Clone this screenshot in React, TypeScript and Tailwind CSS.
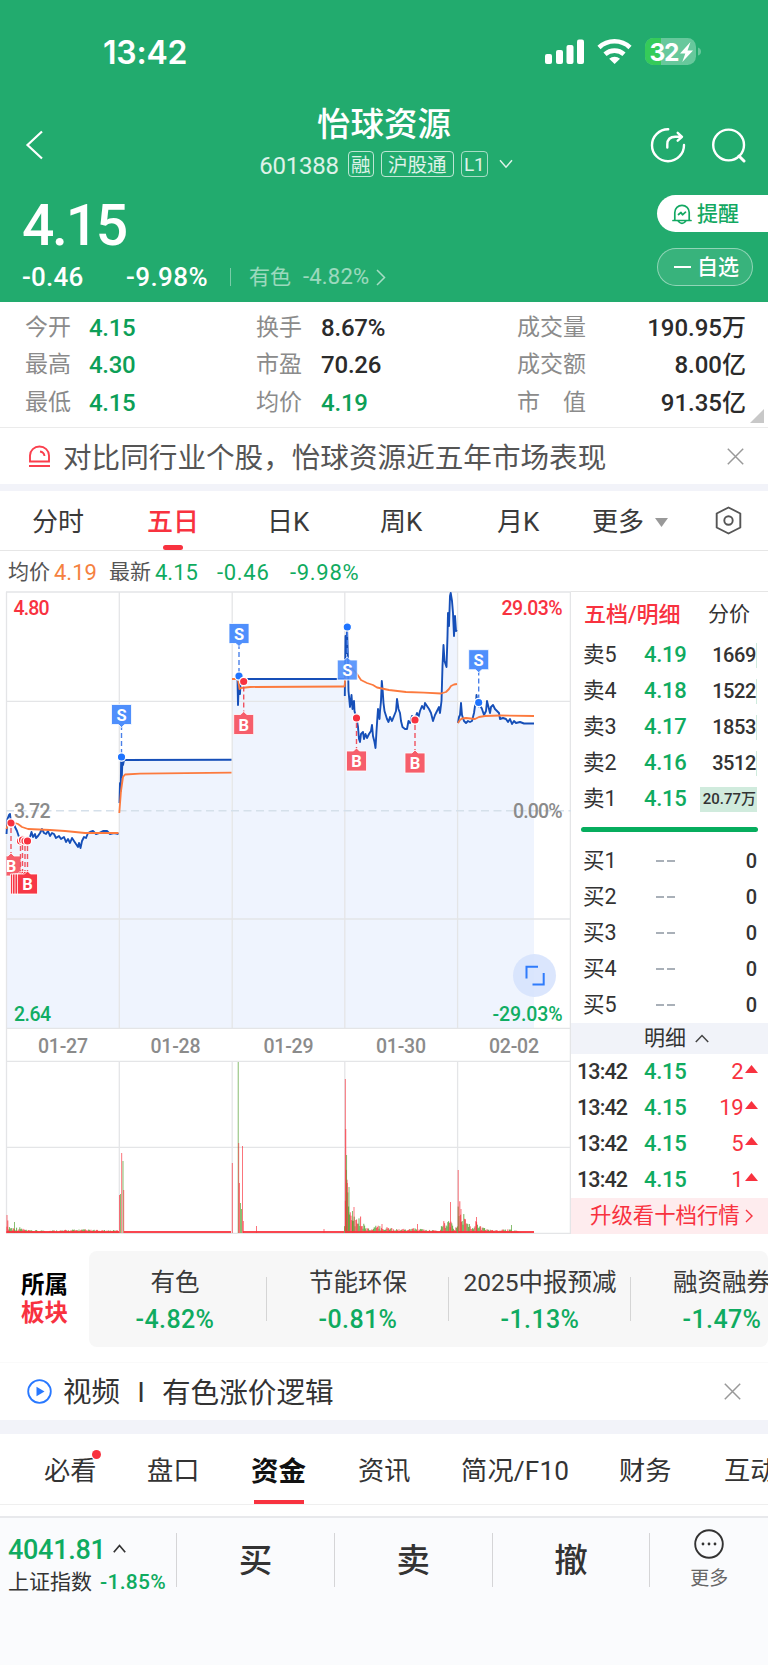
import { Fragment } from 'react';

const STATS = [
  [
    { label: '今开', value: '4.15', down: true },
    { label: '换手', value: '8.67%', down: false },
    { label: '成交量', value: '190.95万', down: false },
  ],
  [
    { label: '最高', value: '4.30', down: true },
    { label: '市盈', value: '70.26', down: false },
    { label: '成交额', value: '8.00亿', down: false },
  ],
  [
    { label: '最低', value: '4.15', down: true },
    { label: '均价', value: '4.19', down: true },
    { label: '市　值', value: '91.35亿', down: false },
  ],
];

const ASKS = [
  { label: '卖5', price: '4.19', qty: '1669' },
  { label: '卖4', price: '4.18', qty: '1522' },
  { label: '卖3', price: '4.17', qty: '1853' },
  { label: '卖2', price: '4.16', qty: '3512' },
  { label: '卖1', price: '4.15', qty: '20.77万', big: true },
];

const BIDS = ['买1', '买2', '买3', '买4', '买5'];

const TICKS = [2, 19, 5, 1];

const SECTORS = [
  { name: '有色', pct: '-4.82%' },
  { name: '节能环保', pct: '-0.81%' },
  { name: '2025中报预减', pct: '-1.13%' },
  { name: '融资融券', pct: '-1.47%' },
];

// price polylines, one per trading day
const PRICE_DAYS = [
  '6.5,243 7.5,228 9,224 10,223 11,232 13,230 15,236 17,240 19,246 21,250 24,251 26,250 28,248 30,246 31.5,241 33,246 35,243 36,247 38,245 40,242 42,238 44,242 46,243 48,240 50,245 52,242 54,243 56,247 59,245 61,248 64,246 66,251 68,248 70,252 72,247 74,250 76,253 78,256 79,252 80.5,257 82,250 84,246 86,247 88,242 90,241 93,240 96,243 99,242 103,240 107,240 110,243 114,242 118.5,243',
  '119.5,212 120,192 120.7,200 121.2,166 121.8,186 122.5,168 123,174 124,169 231.5,168.7',
  '232,88 237.5,88 238,114 239,85 240,103 240.7,88 344.5,88',
  '344.8,105 345.5,45 346.5,62 347,35 348,70 348.5,100 350,116 351,108 351.5,104 352.5,118 354,110 354.5,120 355.5,124 356.5,127 358,136 359,148 360,151 361,143 363,141 364,148 365.5,143 367,147 369,143 371,140 372,134 373,145 374.5,151 375.5,157 376.5,140 377.5,125 378,118 379.5,128 380,120 381,110 381.8,90 382.7,100 383.5,112 384.5,120 387,128 388.5,131 390,126 392,130 394,125 396,120 397,108 398.5,118 400,122 401,130 402.5,136 405,138 407,138 408.5,130 410,132 412,125 414,129 415,128 417,122 418.5,126 420,120 422,115 424,118 425,112 427,115 429,118 431,122 433,130 435,124 437,120 439,116 440,122 441.5,110 442.5,75 443.5,54 444.5,70 446.5,76 447.5,45 448,22 449,35 450,5 450.7,2 452,10 453,22 454,45 455,25 456,40 457,39',
  '458,132 459,126 460,124 461,112 462,124 464,130 466,132 468,130 470,131 472,130 474,122 475,115 476,112 476.5,104 477.5,112 479,110 480,114 482,118 484,124 486,120 487,110 489,118 490,122 491,116 493,114 495,118 497,120 499,122 500,128 503,127 506,128 508,131 510,128 512,133 514,130 516,132 520,131 524,132.5 534,132.5',
];

const AVG_DAYS = [
  '6.5,238 8,232 10,230 15,232 18,233 22,236 28,238 50,239 65,240 85,242 118.5,242',
  '119.3,222 121,200 123,186 125,183.5 140,182.7 231.5,181.7',
  '232,88 238,88 239.5,98 241,97 250,96 344.5,95.5',
  '344.5,96 345.5,85 347,78 352,77 357,83 361,89 367,92 373,94 377,96.5 389,99 406,101 424,101.7 441,102.5 446,101 449,98 451,95 454,93.5 457,93',
  '458,132 460,129 462,127.5 466,127 475,128 479,126 485,125 500,124.5 534,125',
];

const DAY_EDGES = [
  [6, 119],
  [119, 232],
  [232, 344.5],
  [344.5, 457.5],
  [457.5, 534],
];

// [x, height] envelope of the intraday volume
const VOLUME_ENVELOPE = [
  [6.5, 18], [8, 9], [12, 6], [20, 6], [27, 3], [60, 3], [80, 4], [100, 3], [118, 3],
  [119, 0], [344, 0],
  [344.5, 60], [347, 70], [350, 40], [354, 18], [360, 17], [365, 7], [371, 4], [376, 8], [381, 7],
  [390, 6], [400, 4], [416, 5], [430, 3], [440, 3], [443, 16], [446, 8], [450, 17], [453, 7], [457, 7],
  [458, 38], [461, 24], [466, 15], [471, 6], [477, 15], [481, 6], [495, 3], [512, 4], [520, 1], [534, 0],
];

const VOLUME_SPIKES = [
  { x: 7, h: 18, up: true }, { x: 14.5, h: 11, up: false },
  { x: 119.5, h: 38, up: true }, { x: 120.5, h: 39, up: false }, { x: 121.7, h: 80, up: true },
  { x: 123, h: 72, up: false }, { x: 123.7, h: 43, up: true },
  { x: 232.3, h: 70, up: true }, { x: 238.2, h: 171, up: false }, { x: 238.7, h: 90, up: true },
  { x: 239.4, h: 50, up: true }, { x: 240.5, h: 30, up: false }, { x: 241.5, h: 24, up: false },
  { x: 242.5, h: 87, up: true }, { x: 243.3, h: 12, up: true }, { x: 256.5, h: 7, up: true }, { x: 324, h: 4, up: true },
  { x: 345.3, h: 154, up: true }, { x: 345.8, h: 104, up: true }, { x: 346.6, h: 78, up: false },
  { x: 347.3, h: 50, up: true }, { x: 349, h: 46, up: false }, { x: 352.5, h: 22, up: false }, { x: 354, h: 26, up: true },
  { x: 382, h: 9, up: true }, { x: 417.5, h: 9, up: true }, { x: 450.5, h: 31, up: true },
  { x: 458.2, h: 63, up: true }, { x: 461, h: 24, up: true }, { x: 476.5, h: 16, up: true }, { x: 511.5, h: 8, up: false },
];

function envelopeAt(x: number) {
  for (let i = 1; i < VOLUME_ENVELOPE.length; i++) {
    const [x0, h0] = VOLUME_ENVELOPE[i - 1];
    const [x1, h1] = VOLUME_ENVELOPE[i];
    if (x <= x1) return h0 + ((h1 - h0) * (x - x0)) / (x1 - x0);
  }
  return 0;
}

const VOLUME_BARS = Array.from({ length: 660 }, (_, i) => {
  const x = 6.5 + i * 0.8;
  const noise = Math.abs(Math.sin(i * 12.9898) * 43758.5453) % 1;
  return { x, h: envelopeAt(x) * (0.35 + noise * 0.65), up: (i * 7919) % 13 < 6 };
}).filter((b) => b.h > 0 && b.x < 534);

const UP = '#f8323c';
const DOWN = '#4f9e2c';

function TradeMarker({ x, top, dot, kind, solid, under, covered }: {
  x: number; top: number; dot: number; kind: 'B' | 'S'; solid?: boolean; under?: boolean; covered?: boolean;
}) {
  const sell = kind === 'S';
  const box = sell ? '#4f8ffc' : solid ? '#f73846' : '#f65e6b';
  const line = sell ? '#4a80e8' : '#f0525f';
  const pointDown = sell && !under;
  return (
    <g>
      <line x1={x} x2={x} y1={dot + 5} y2={pointDown ? top + 22 : top - 3} stroke={line} strokeWidth="1.4" strokeDasharray="5 3" />
      <circle cx={x} cy={dot} r="4.2" fill={sell ? '#1f74ff' : '#f73240'} stroke="#fff" strokeWidth="1.2" />
      <path
        d={
          pointDown
            ? `M${x - 10} ${top}h20v20h-7l-3 3l-3-3h-7z`
            : `M${x - 10} ${top}h7l3-3l3 3h7v20h-20z`
        }
        fill={box}
        fillOpacity={under ? 0.9 : 1}
        stroke="#fff"
        strokeWidth="0.8"
      />
      {!covered && (
        <text x={x} y={top + 16} textAnchor="middle" fontSize="16.5" fontWeight="700" fill="#fff">{kind}</text>
      )}
    </g>
  );
}

function Chart() {
  return (
    <svg width="571" height="643" viewBox="0 0 571 643" className="block shrink-0 font-['Roboto']">
      {PRICE_DAYS.map((pts, i) => (
        <polygon key={i} points={`${DAY_EDGES[i][0]},437 ${pts} ${DAY_EDGES[i][1]},437`} fill="#eff4fe" />
      ))}

      {/* grid */}
      <g stroke="#e4e5e7" strokeWidth="1.3">
        <path d="M6 1H571M6 110.3H571M6 328H571M6 437.3H571M6 470.3H571M6 556.3H571M6 642.4H571" />
        <path d="M6.5 1V642M119.3 1V437M232.2 1V437M344.8 1V437M457.6 1V437M570.4 1V642" />
        <path d="M119.3 470V642M232.2 470V642M344.8 470V642M457.6 470V642" />
      </g>
      <path d="M6 219.8H571" stroke="#d5e0ea" strokeWidth="1.6" strokeDasharray="8 4.5" />

      <g fontSize="19.5" fontWeight="500">
        <text x="13.5" y="23.5" fill="#f8323f" textLength="36">4.80</text>
        <text x="562.5" y="23.5" fill="#f8323f" textAnchor="end" textLength="61">29.03%</text>
        <text x="14" y="226.5" fill="#8b8b8b" textLength="36.5">3.72</text>
        <text x="562.5" y="226.5" fill="#8b8b8b" textAnchor="end" textLength="49.5">0.00%</text>
        <text x="14" y="429.5" fill="#10ad63" textLength="37">2.64</text>
        <text x="562.5" y="429.5" fill="#10ad63" textAnchor="end" textLength="70">-29.03%</text>
      </g>

      {PRICE_DAYS.map((pts, i) => (
        <polyline key={i} points={pts} fill="none" stroke="#164fb8" strokeWidth="1.9" strokeLinejoin="round" />
      ))}
      {AVG_DAYS.map((pts, i) => (
        <polyline key={i} points={pts} fill="none" stroke="#fc7a3e" strokeWidth="1.8" strokeLinejoin="round" />
      ))}

      {/* trades */}
      <clipPath id="plot"><rect x="6.5" y="0" width="564" height="437" /></clipPath>
      <g clipPath="url(#plot)">
        <TradeMarker x={11} top={265} dot={232} kind="B" />
        <TradeMarker x={20.5} top={283} dot={250} kind="B" solid covered />
        <TradeMarker x={22.5} top={283} dot={249} kind="B" solid covered />
        <TradeMarker x={25} top={283} dot={250} kind="B" solid covered />
        <TradeMarker x={27.5} top={283} dot={250} kind="B" solid />
        <TradeMarker x={121.5} top={113.5} dot={166} kind="S" />
        <TradeMarker x={239} top={32.5} dot={85} kind="S" />
        <TradeMarker x={243.7} top={123.5} dot={90.5} kind="B" />
        <TradeMarker x={347.3} top={69} dot={36} kind="S" under />
        <TradeMarker x={356.5} top={160} dot={127} kind="B" />
        <TradeMarker x={415} top={162} dot={129} kind="B" />
        <TradeMarker x={478.7} top={58.7} dot={111.5} kind="S" />
      </g>

      {/* expand */}
      <circle cx="534.5" cy="384.5" r="21.5" fill="#d5e2fd" fillOpacity="0.85" />
      <path d="M526.5 387.5V375.7H538M532.5 393.5H543.7V382" fill="none" stroke="#2f7bfb" strokeWidth="2" />

      <g fontSize="19.5" fontWeight="500" fill="#8b8b8b" textAnchor="middle">
        <text x="63" y="461.5" textLength="50">01-27</text>
        <text x="175.5" y="461.5" textLength="50">01-28</text>
        <text x="288.5" y="461.5" textLength="50">01-29</text>
        <text x="401" y="461.5" textLength="50">01-30</text>
        <text x="514" y="461.5" textLength="50">02-02</text>
      </g>

      {/* volume */}
      {VOLUME_BARS.map((b, i) => (
        <rect key={i} x={b.x} y={642 - b.h} width="1" height={b.h} fill={b.up ? UP : DOWN} fillOpacity="0.8" />
      ))}
      {VOLUME_SPIKES.map((b, i) => (
        <rect key={i} x={b.x - 0.45} y={642 - b.h} width="0.9" height={b.h} fill={b.up ? UP : DOWN} fillOpacity="0.75" />
      ))}
      <path d="M124 641H231M243 641H344M345 641H457M458 641H534M6.5 641H119" stroke={UP} strokeWidth="1.8" strokeOpacity="0.9" />
    </svg>
  );
}

function CloseIcon() {
  return (
    <svg width="17" height="17" viewBox="0 0 17 17" fill="none" stroke="#999" strokeWidth="1.5">
      <path d="M0.8 0.8l15.4 15.4M16.2 0.8L0.8 16.2" />
    </svg>
  );
}

function StatusBar() {
  return (
    <div className="flex h-[105px] pl-[103px]">
      <div className="mt-[37px] h-8 w-[442px] font-['Inter'] text-[32px] leading-8 font-semibold tracking-[-0.2px]">13:42</div>
      <svg width="160" height="30" viewBox="545 36 160 30" className="mt-9 shrink-0">
        <rect x="545" y="54" width="7" height="10" rx="2" fill="#fff" />
        <rect x="556" y="50" width="7" height="14" rx="2" fill="#fff" />
        <rect x="566.5" y="45" width="7" height="19" rx="2" fill="#fff" />
        <rect x="577" y="39.5" width="7" height="24.5" rx="2" fill="#fff" />
        <g fill="none" stroke="#fff" strokeWidth="4.6">
          <path d="M599 47.5a22.5 22.5 0 0 1 31 0" />
          <path d="M605 54.3a14 14 0 0 1 19 0" />
        </g>
        <path d="M614.6 64l-5.4-5.2a8 8 0 0 1 10.8 0z" fill="#fff" />
        <clipPath id="battery"><rect x="645" y="38" width="51" height="27" rx="8.5" /></clipPath>
        <g clipPath="url(#battery)">
          <rect x="645" y="38" width="51" height="27" fill="#67c89c" />
          <rect x="645" y="38" width="16" height="27" fill="#35cb59" />
        </g>
        <path d="M698 47.5q3 1 3 4t-3 4z" fill="#67c89c" />
        <text x="649.5" y="60.5" fontSize="24.5" fontWeight="700" fontFamily="Inter" fill="#fff" textLength="30">32</text>
        <path d="M690.5 42l-10.5 11.5h5.3l-3 8.5 10.7-11.5h-5.5z" fill="#fff" />
      </svg>
    </div>
  );
}

function Header() {
  return (
    <header className="h-[302px] bg-[#22ab6e] text-white">
      <StatusBar />
      <div className="flex h-[82px] justify-between">
        <div className="w-[180px] pl-[25px] pt-[25px]">
          <svg width="18" height="30" viewBox="0 0 18 30" fill="none" stroke="#fff" strokeWidth="2.2">
            <path d="M17 1.5L2.5 15L17 28.5" />
          </svg>
        </div>
        <div className="flex flex-col items-center">
          <h1 className="h-[45px] text-[33.5px] leading-[39px] font-medium">怡球资源</h1>
          <div className="flex h-7 items-center pl-1 leading-none text-white/85">
            <span className="mr-[9px] pt-1 text-[24px] tracking-[-0.2px]">601388</span>
            <span className="mr-[7px] flex h-[26px] w-[26px] items-center justify-center rounded border border-white/70 pt-1 text-[19.5px]">融</span>
            <span className="mr-[7px] flex h-[26px] w-[73px] items-center justify-center rounded border border-white/70 pt-1 text-[19.5px]">沪股通</span>
            <span className="mr-[11px] flex h-[26px] w-[27px] items-center justify-center rounded border border-white/60 pt-px text-[19px]">L1</span>
            <svg width="14" height="10" viewBox="0 0 14 10" fill="none" stroke="#fff" strokeOpacity="0.85" strokeWidth="1.5">
              <path d="M1 1.2l6 7l6-7" />
            </svg>
          </div>
        </div>
        <div className="flex w-[180px] justify-end gap-[25px] pt-[22px] pr-[21px]">
          <svg width="36" height="36" viewBox="0 0 36 36" fill="none" stroke="#fff" strokeWidth="2.4" strokeLinecap="round" strokeLinejoin="round">
            <path d="M18.2 2.2A16 16 0 1 0 34 18" />
            <path d="M17.3 20.5v-3q0-7.7 8-7.7h6M27.7 5.8l4.3 4l-4.3 3.9" />
          </svg>
          <svg width="36" height="36" viewBox="0 0 36 36" fill="none" stroke="#fff" strokeWidth="2.4" strokeLinecap="round">
            <circle cx="17.6" cy="18" r="15.4" />
            <path d="M28 29l5 5" strokeWidth="3" />
          </svg>
        </div>
      </div>
      <div className="flex justify-between">
        <div className="pl-[22px]">
          <div className="mt-[17px] h-[44px] text-[57px] leading-[44px] font-medium tracking-[-2.3px]">4.15</div>
          <div className="mt-4 flex h-[26px] items-center leading-none">
            <span className="w-[104px] text-[26px] font-medium tracking-[0.2px]">-0.46</span>
            <span className="w-[104px] text-[26px] font-medium tracking-[0.4px]">-9.98%</span>
            <span className="mr-[18px] h-[18px] w-px bg-white/40" />
            <span className="w-[54px] text-[21px] text-white/55">有色</span>
            <span className="w-[73px] text-[22px] tracking-[0.2px] text-white/55">-4.82%</span>
            <svg width="10" height="17" viewBox="0 0 10 17" fill="none" stroke="#fff" strokeOpacity="0.6" strokeWidth="1.5">
              <path d="M1 1l7.5 7.5L1 16" />
            </svg>
          </div>
        </div>
        <div className="flex w-[111px] flex-col pt-2">
          <div className="flex h-[37px] items-center rounded-l-full bg-white pl-[15px] text-[21px] leading-none font-medium text-[#12a862]">
            <svg width="20" height="22" viewBox="0 0 20 22" fill="none" stroke="#12a862" strokeWidth="1.7" strokeLinecap="round" strokeLinejoin="round" className="mr-[5px]">
              <path d="M1 17.5h18M2.8 17V9.5a7.2 7.2 0 0 1 14.4 0V17M6.5 18.5q3.5 3.5 7 0M6.5 11.5l2.5-2l1.5 2.3l3-2.6" />
            </svg>
            <span className="pt-0.5">提醒</span>
          </div>
          <div className="mt-4 flex h-[38px] w-24 items-center rounded-full border border-white/45 bg-white/10 pl-4 text-[21px] leading-none font-medium">
            <span className="mr-1.5 h-0.5 w-[17px] bg-white" />
            <span>自选</span>
          </div>
        </div>
      </div>
    </header>
  );
}

function Stats() {
  return (
    <section className="relative flex h-[126px] flex-col border-b border-[#ebebeb] pt-[7px] leading-none">
      {STATS.map((row) => (
        <div key={row[0].label} className="flex h-[37.3px] items-center pl-[25px] pr-[22px]">
          {row.map((s, i) => (
            <Fragment key={s.label}>
              <span className={['text-[23px] text-[#8b8b8b]', i === 2 ? 'w-[76px]' : i === 1 ? 'w-[65px]' : 'w-16'].join(' ')}>
                {s.label}
              </span>
              <span
                className={[
                  'pt-px text-[24px] font-medium',
                  i === 0 ? 'w-[167px] tracking-[-0.3px]' : i === 1 ? 'w-[196px] tracking-[-0.2px]' : 'grow text-right',
                  s.down ? 'text-[#0c9f57]' : 'text-[#2b2b2b]',
                ].join(' ')}
              >
                {s.value}
              </span>
            </Fragment>
          ))}
        </div>
      ))}
      <svg width="14" height="14" viewBox="0 0 14 14" className="absolute right-1 bottom-1">
        <path d="M14 0v14H0z" fill="#c8c8c8" />
      </svg>
    </section>
  );
}

function Notice() {
  return (
    <section className="flex h-14 items-center pl-[28px] pr-[24px] leading-none text-[#555]">
      <svg width="23" height="23" viewBox="0 0 23 23" fill="none" stroke="#fa3f4d" strokeWidth="1.9" className="mr-3">
        <path d="M2 16.5V10.5a9.5 9 0 0 1 19 0V16.5zM1 21h21M12 6.5q4 .5 4.5 4.5" />
      </svg>
      <span className="grow pt-1 text-[28.6px]">对比同行业个股，怡球资源近五年市场表现</span>
      <CloseIcon />
    </section>
  );
}

function PeriodTabs() {
  return (
    <nav className="flex h-[60px] items-center border-b border-[#e6e6e6] pt-0.5 pl-8 text-[26px] leading-none text-[#3a3a3a]">
      <span className="w-[115px]">分时</span>
      <span className="relative w-[120px] font-medium text-[#f8323f]">
        五日
        <span className="absolute -bottom-[15px] left-4 h-[5px] w-5 rounded-sm bg-[#f8323f]" />
      </span>
      <span className="w-[113px]">日K</span>
      <span className="w-[117px]">周K</span>
      <span className="w-[95px]">月K</span>
      <span className="w-[63px]">更多</span>
      <svg width="13" height="9" viewBox="0 0 13 9" className="mt-0.5 mr-[47px]">
        <path d="M0 0h13l-6.5 9z" fill="#999" />
      </svg>
      <svg width="27" height="29" viewBox="0 0 27 29" fill="none" stroke="#555" strokeWidth="1.9" strokeLinejoin="round" className="-mt-0.5">
        <path d="M13.5 1.5L25.3 7.5V21.5L13.5 27.5L1.7 21.5V7.5z" />
        <circle cx="13.5" cy="14.5" r="4.2" />
      </svg>
    </nav>
  );
}

function OrderBook() {
  return (
    <aside className="flex w-[197px] flex-col border-t border-[#e6e6e6] text-[22px] leading-none text-[#333]">
      <div className="flex h-[45px] items-center justify-between pl-[13px] pr-[18px] text-[21px]">
        <span className="text-[22px] font-medium text-[#f8323f]">五档/明细</span>
        <span>分价</span>
      </div>
      {ASKS.map((a) => (
        <div key={a.label} className="flex h-9 items-center pl-3 pr-[11px]">
          <span className="w-[61px] text-[21.5px]">{a.label}</span>
          <span className="text-[22px] font-medium tracking-[-0.3px] text-[#0fab60]">{a.price}</span>
          <span
            className={[
              'ml-auto flex h-[25px] items-center justify-end font-medium whitespace-nowrap',
              a.big ? 'w-[57px] bg-[#d0ebdd] pr-px text-[15px]' : 'border-r border-[#d0ebdd] text-[20px] tracking-[-0.4px]',
            ].join(' ')}
          >
            {a.qty}
          </span>
        </div>
      ))}
      <div className="mx-2.5 mt-[10px] mb-[11px] h-[5px] rounded-full bg-[#06ad5e]" />
      {BIDS.map((b) => (
        <div key={b} className="flex h-9 items-center pl-3 pr-[11px]">
          <span className="w-[73px] text-[21.5px]">{b}</span>
          <span className="flex gap-[3px]">
            <span className="h-0.5 w-2 bg-[#a9b0b8]" />
            <span className="h-0.5 w-2 bg-[#a9b0b8]" />
          </span>
          <span className="ml-auto text-[20px] font-medium">0</span>
        </div>
      ))}
      <div className="flex h-[31px] items-center justify-center gap-[9px] bg-[#f1f3f9] pl-3.5 text-[21px]">
        明细
        <svg width="14" height="9" viewBox="0 0 14 9" fill="none" stroke="#444" strokeWidth="1.5">
          <path d="M.8 8L7 1.5L13.2 8" />
        </svg>
      </div>
      {TICKS.map((n) => (
        <div key={n} className="flex h-9 items-center pl-[6px] pr-2.5 font-medium">
          <span className="w-[67px] text-[21.5px] tracking-[-0.9px]">13:42</span>
          <span className="text-[22px] tracking-[-0.3px] text-[#0fab60]">4.15</span>
          <span className="ml-auto text-[22px] font-normal tracking-[-0.5px] text-[#f8323f]">{n}</span>
          <svg width="13" height="8" viewBox="0 0 13 8" className="mb-1.5 ml-0.5">
            <path d="M0 8L6.5 0L13 8z" fill="#f8323f" />
          </svg>
        </div>
      ))}
      <div className="flex h-9 items-center bg-[#feecee] pl-[19px] text-[21.4px] text-[#f8323f]">
        升级看十档行情
        <svg width="8" height="14" viewBox="0 0 8 14" fill="none" stroke="#f8323f" strokeWidth="1.4" className="ml-[5px]">
          <path d="M1 1l6 6l-6 6" />
        </svg>
      </div>
    </aside>
  );
}

function Sectors() {
  return (
    <section className="flex h-[128px] items-start overflow-hidden pt-[17px] leading-none">
      <div className="w-[89px] shrink-0 pt-[21px] pl-[21px] text-[23.5px] leading-[27.5px] font-bold">
        <div className="text-black">所属</div>
        <div className="text-[#f8323f]">板块</div>
      </div>
      <div className="flex h-24 w-[679px] overflow-hidden rounded-lg bg-[#f7f7f7]">
        {SECTORS.map((s, i) => (
          <div key={s.name} className="flex w-[182px] shrink-0 items-center pt-0.5 first:w-[178px]">
            <div className={['flex grow flex-col items-center pt-0.5', i === 0 ? 'pr-1.5' : ''].join(' ')}>
              <span className="h-[37px] text-[24.5px] leading-[26px] whitespace-nowrap text-[#3a3a3a]">{s.name}</span>
              <span className="text-[25px] leading-[26px] font-medium tracking-[0.4px] text-[#0fab60]">{s.pct}</span>
            </div>
            {i < 3 && <span className="-mt-0.5 -ml-px h-11 w-px bg-[#d5d5d5]" />}
          </div>
        ))}
      </div>
    </section>
  );
}

function VideoRow() {
  return (
    <section className="flex h-[58px] items-center border-t border-[#fafafa] pl-[27px] pr-[27px] leading-none text-[#333]">
      <svg width="25" height="25" viewBox="0 0 25 25" fill="none" className="mr-[11px]">
        <circle cx="12.5" cy="12.5" r="11.3" stroke="#2878ff" strokeWidth="1.8" />
        <path d="M9.5 7.8L17.5 12.5L9.5 17.2z" fill="#2878ff" />
      </svg>
      <span className="pt-1 text-[28.5px]">视频</span>
      <span className="w-[42px] pt-0.5 text-center text-[28px]">I</span>
      <span className="grow pt-1 text-[28.6px]">有色涨价逻辑</span>
      <CloseIcon />
    </section>
  );
}

function ContentTabs() {
  return (
    <nav className="flex h-[71px] items-center overflow-hidden border-b border-[#efefef] pt-[5px] pl-11 text-[26.2px] leading-none whitespace-nowrap text-[#333]">
      <span className="relative w-[103px] shrink-0">
        必看
        <span className="absolute -top-2 left-12 h-[9px] w-[9px] rounded-full bg-[#f8323f]" />
      </span>
      <span className="w-[104px] shrink-0">盘口</span>
      <span className="relative w-[107px] shrink-0 text-[27.5px] font-bold text-[#111]">
        资金
        <span className="absolute -bottom-[19px] left-[3px] h-1 w-[50px] bg-[#f8323f]" />
      </span>
      <span className="w-[103px] shrink-0">资讯</span>
      <span className="w-[158px] shrink-0 tracking-[0.2px]">简况/F10</span>
      <span className="w-[105px] shrink-0">财务</span>
      <span className="shrink-0">互动</span>
    </nav>
  );
}

function TradeBar() {
  return (
    <footer className="mt-[11px] h-[149px] border-t-2 border-[#e8e9ec] bg-[#fafbfd] leading-none text-[#333]">
      <div className="flex h-[84px] items-center">
        <div className="flex w-[176px] shrink-0 flex-col pt-2.5 pl-2">
          <div className="flex items-center text-[27px] font-medium text-[#0fab60]">
            <span className="tracking-[-0.3px]">4041.81</span>
            <svg width="13" height="9" viewBox="0 0 13 9" fill="none" stroke="#333" strokeWidth="1.7" className="mb-1 ml-2">
              <path d="M.8 8.2L6.5 1.5L12.2 8.2" />
            </svg>
          </div>
          <div className="mt-2 flex items-center text-[21px] whitespace-nowrap">
            <span className="w-[92px]">上证指数</span>
            <span className="font-medium tracking-[0.3px] text-[#0fab60]">-1.85%</span>
          </div>
        </div>
        {['买', '卖', '撤'].map((t) => (
          <div key={t} className="flex h-[54px] w-[157.8px] shrink-0 items-center justify-center border-l border-[#d5d5d7] pt-0.5 text-[33.5px] font-medium">
            {t}
          </div>
        ))}
        <div className="flex h-[54px] grow flex-col items-center border-l border-[#d5d5d7] text-[19px] text-[#666]">
          <svg width="30" height="30" viewBox="0 0 30 30" fill="none" stroke="#333" strokeWidth="1.9" className="-mt-1 mb-2.5 shrink-0">
            <circle cx="15" cy="15" r="13.8" />
            <g fill="#333" stroke="none">
              <circle cx="9" cy="15" r="1.4" />
              <circle cx="15" cy="15" r="1.4" />
              <circle cx="21" cy="15" r="1.4" />
            </g>
          </svg>
          更多
        </div>
      </div>
    </footer>
  );
}

export default function App() {
  return (
    <div className="w-[768px] overflow-hidden bg-white font-['Roboto','Noto_Sans_CJK_SC',sans-serif]">
      <Header />
      <Stats />
      <Notice />
      <div className="h-[7px] bg-[#f2f3f9]" />
      <PeriodTabs />
      <div className="flex h-10 items-center pt-[3px] pl-2 text-[21px] leading-none text-[#555]">
        <span className="w-[46px]">均价</span>
        <span className="w-[55px] text-[22px] text-[#f5813f]">4.19</span>
        <span className="w-[46px]">最新</span>
        <span className="w-[62px] text-[22px] text-[#0fab60]">4.15</span>
        <span className="w-[73px] text-[22px] tracking-[0.7px] text-[#0fab60]">-0.46</span>
        <span className="text-[22px] tracking-[0.7px] text-[#0fab60]">-9.98%</span>
      </div>
      <div className="flex">
        <Chart />
        <OrderBook />
      </div>
      <Sectors />
      <VideoRow />
      <div className="h-3.5 bg-[#f2f3f9]" />
      <ContentTabs />
      <TradeBar />
    </div>
  );
}
